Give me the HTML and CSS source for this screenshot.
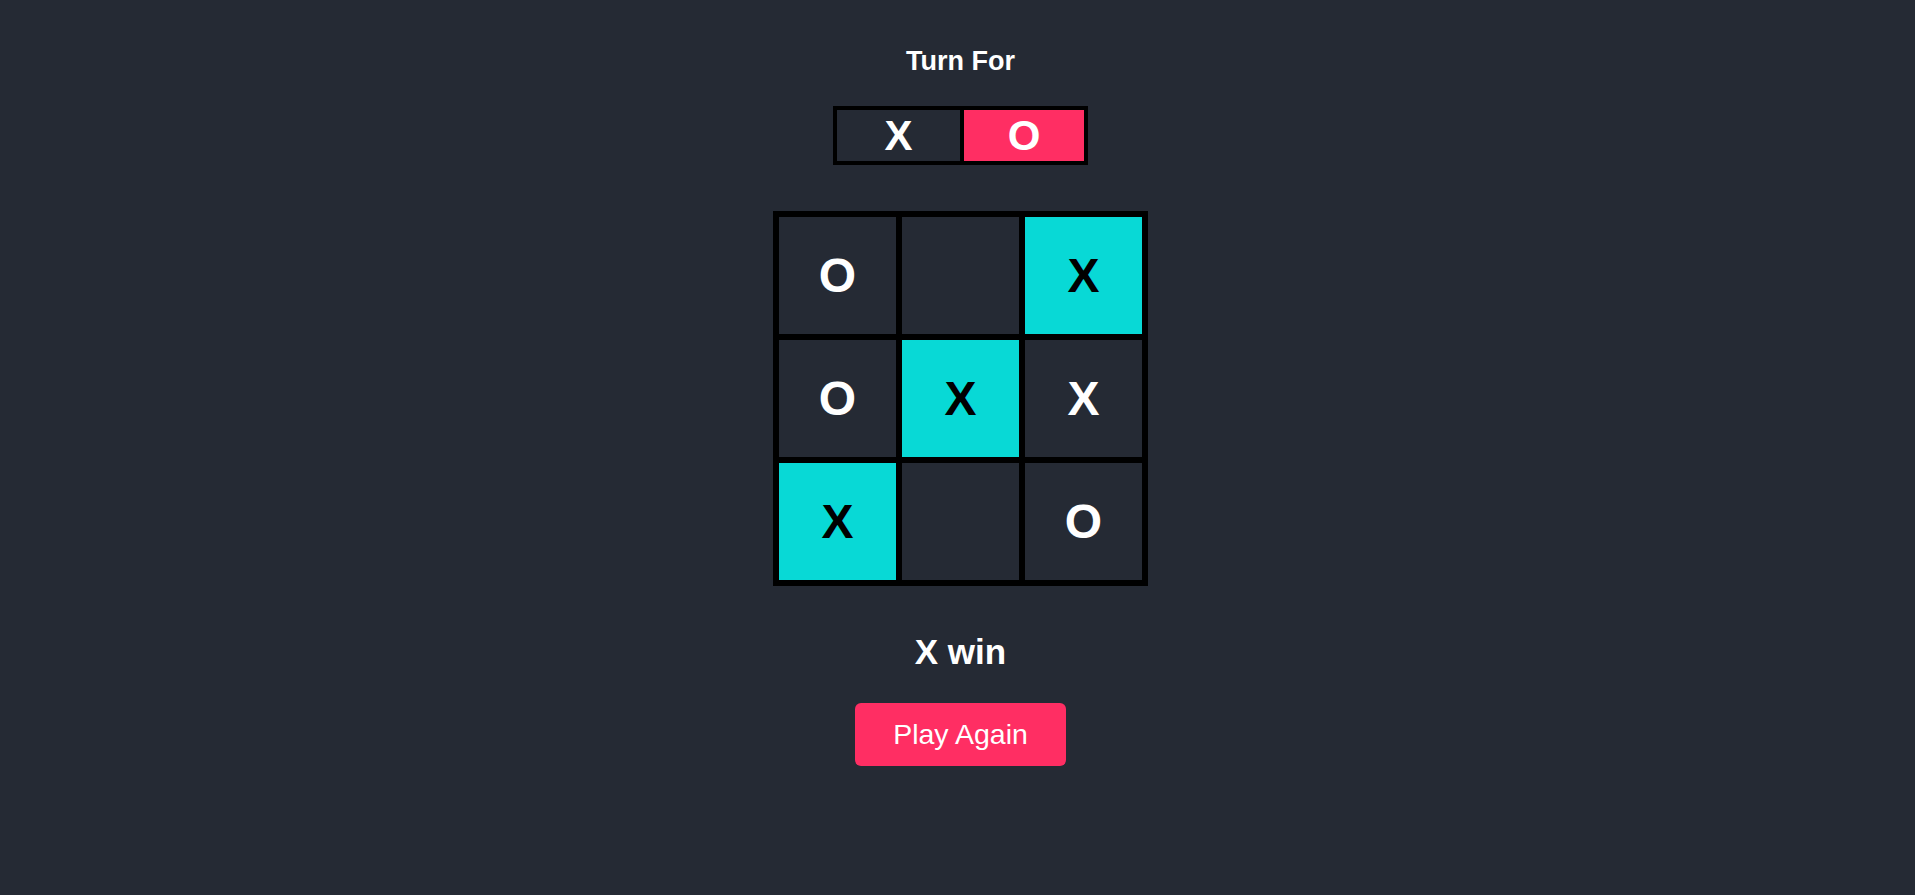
FILE: index.html
```html
<!DOCTYPE html>
<html lang="en">
<head>
<meta charset="utf-8">
<title>Tic Tac Toe</title>
<link rel="stylesheet" href="styles.css">
</head>
<body>
<div class="app">
  <h3 class="turn-title">Turn For</h3>
  <div class="turn-box">
    <div class="turn-cell turn-x">X</div>
    <div class="turn-cell turn-o active">O</div>
  </div>
  <div class="board">
    <div class="cell">O</div>
    <div class="cell"></div>
    <div class="cell win">X</div>
    <div class="cell">O</div>
    <div class="cell win">X</div>
    <div class="cell">X</div>
    <div class="cell win">X</div>
    <div class="cell"></div>
    <div class="cell">O</div>
  </div>
  <h2 class="result">X win</h2>
  <button class="play-again">Play Again</button>
</div>
</body>
</html>
```

FILE: styles.css
```css
html, body {
  margin: 0;
  padding: 0;
  background: #252a34;
}

body {
  font-family: "Liberation Sans", Arial, sans-serif;
  color: #ffffff;
}

.app {
  display: flex;
  flex-direction: column;
  align-items: center;
  padding-left: 6px;
  padding-top: 46px;
}

.turn-title {
  margin: 0;
  font-size: 27px;
  line-height: 30px;
  font-weight: bold;
}

.turn-box {
  margin-top: 30px;
  display: flex;
  border: 4px solid #000;
}

.turn-cell {
  height: 51px;
  display: flex;
  align-items: center;
  justify-content: center;
  font-size: 42px;
  font-weight: bold;
}

.turn-x {
  width: 123px;
  border-right: 4px solid #000;
}

.turn-o {
  width: 120px;
}

.turn-cell.active {
  background: #ff2e63;
}

.board {
  margin-top: 46px;
  display: grid;
  grid-template-columns: repeat(3, 123px);
  grid-template-rows: repeat(3, 123px);
  border: 3px solid #000;
}

.cell {
  border: 3px solid #000;
  background: #252a34;
  display: flex;
  align-items: center;
  justify-content: center;
  font-size: 48px;
  font-weight: bold;
  color: #fff;
}

.cell.win {
  background: #08d9d6;
  color: #000;
}

.result {
  margin: 46px 0 0;
  font-size: 35px;
  line-height: 40px;
  font-weight: bold;
}

.play-again {
  margin-top: 31px;
  padding: 15px 38px;
  border: none;
  border-radius: 6px;
  background: #ff2e63;
  color: #fff;
  font-family: "Liberation Sans", Arial, sans-serif;
  font-size: 28.5px;
  line-height: 33px;
  cursor: pointer;
}
```
